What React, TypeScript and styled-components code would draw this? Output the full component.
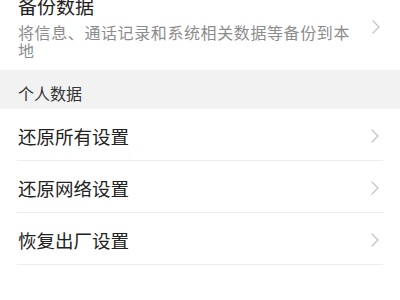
import styled, { createGlobalStyle } from "styled-components";

const GlobalStyle = createGlobalStyle`
  html, body {
    margin: 0;
    padding: 0;
    background: #ffffff;
    overflow: hidden;
  }
  body {
    font-family: "Noto Sans CJK SC", "Noto Sans", sans-serif;
  }
`;

const Page = styled.div`
  width: 400px;
  background: #ffffff;
`;

// the backup entry is scrolled partly out of view at the top
const BackupItem = styled.div`
  display: flex;
  align-items: center;
  gap: 20px;
  margin-top: -16px;
  padding: 10px 20px 11px 18px;
`;

const TextColumn = styled.div`
  flex: 1;
  min-width: 0;
`;

const Title = styled.div`
  font-size: 19px;
  line-height: 24px;
  color: #222222;
`;

const Subtitle = styled.div`
  margin-top: 5px;
  font-size: 16px;
  line-height: 18px;
  letter-spacing: 0.6px;
  color: #8c8c8c;
`;

const SectionHeader = styled.div`
  box-sizing: border-box;
  height: 39px;
  padding: 11px 18px 0;
  background: #f2f2f2;
  font-size: 16px;
  line-height: 24px;
  color: #333333;
`;

const Row = styled.div`
  padding: 0 17px;
`;

const RowInner = styled.div`
  display: flex;
  align-items: center;
  justify-content: space-between;
  height: 49px;
  padding: 2px 4px 0 1px;
  border-bottom: 1px solid #ececec;
`;

const RowLabel = styled.span`
  font-size: 18.5px;
  line-height: 24px;
  color: #222222;
`;

const Chevron = () => (
  <svg width="8" height="14" viewBox="0 0 8 14" fill="none">
    <polyline
      points="1,1 7,7 1,13"
      stroke="#c6c6c6"
      strokeWidth="1.4"
      strokeLinecap="round"
      strokeLinejoin="round"
    />
  </svg>
);

const rows = ["还原所有设置", "还原网络设置", "恢复出厂设置"];

export default function App() {
  return (
    <Page>
      <GlobalStyle />
      <BackupItem>
        <TextColumn>
          <Title>备份数据</Title>
          <Subtitle>将信息、通话记录和系统相关数据等备份到本地</Subtitle>
        </TextColumn>
        <Chevron />
      </BackupItem>
      <SectionHeader>个人数据</SectionHeader>
      {rows.map((label) => (
        <Row key={label}>
          <RowInner>
            <RowLabel>{label}</RowLabel>
            <Chevron />
          </RowInner>
        </Row>
      ))}
    </Page>
  );
}
